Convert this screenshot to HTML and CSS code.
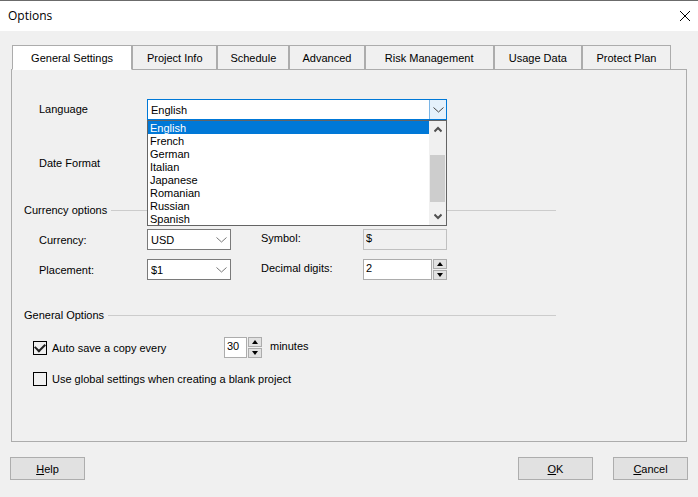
FILE: index.html
```html
<!DOCTYPE html>
<html lang="en">
<head>
    <meta charset="UTF-8">
    <meta name="viewport" content="width=device-width, initial-scale=1.0">
    <title>Options</title>
    <link rel="stylesheet" href="styles.css">
</head>
<body>
    <header class="title-bar">
        <h1>Options</h1>
        <button class="close" type="button" aria-label="Close">
            <svg width="10" height="10" viewBox="0 0 10 10"><path d="M0 0L10 10M10 0L0 10" stroke="#000" fill="none"/></svg>
        </button>
    </header>

    <main class="content">
        <div class="tabs" role="tablist">
            <button class="tab active" type="button" role="tab" aria-selected="true">General Settings</button>
            <button class="tab" type="button" role="tab">Project Info</button>
            <button class="tab" type="button" role="tab">Schedule</button>
            <button class="tab" type="button" role="tab">Advanced</button>
            <button class="tab" type="button" role="tab">Risk Management</button>
            <button class="tab" type="button" role="tab">Usage Data</button>
            <button class="tab" type="button" role="tab">Protect Plan</button>
        </div>

        <form class="panel" id="options">
            <div class="row language-row">
                <label for="language">Language</label>
                <div class="combo open">
                    <select id="language">
                        <option>English</option>
                    </select>
                    <span class="arrow"><svg width="11" height="6" viewBox="0 0 11 6"><path d="M0.5 0.5L5.5 5L10.5 0.5" stroke="#444" fill="none"/></svg></span>
                    <div class="dropdown">
                        <ul class="list" role="listbox" aria-label="Language">
                            <li class="selected" role="option" aria-selected="true">English</li>
                            <li role="option">French</li>
                            <li role="option">German</li>
                            <li role="option">Italian</li>
                            <li role="option">Japanese</li>
                            <li role="option">Romanian</li>
                            <li role="option">Russian</li>
                            <li role="option">Spanish</li>
                        </ul>
                        <div class="scrollbar">
                            <svg width="8" height="7" viewBox="0 0 8 7"><path d="M0.5 5.5L4 2L7.5 5.5" stroke="#505050" stroke-width="2" fill="none"/></svg>
                            <span class="thumb"></span>
                            <svg width="8" height="7" viewBox="0 0 8 7"><path d="M0.5 1.5L4 5L7.5 1.5" stroke="#505050" stroke-width="2" fill="none"/></svg>
                        </div>
                    </div>
                </div>
            </div>

            <div class="row">
                <label for="date-format">Date Format</label>
                <div class="combo">
                    <select id="date-format"></select>
                </div>
            </div>

            <section class="currency-group">
                <h2>Currency options</h2>
                <div class="currency">
                    <label for="currency">Currency:</label>
                    <div class="combo">
                        <select id="currency"><option>USD</option></select>
                        <span class="arrow"><svg width="11" height="6" viewBox="0 0 11 6"><path d="M0.5 0.5L5.5 5L10.5 0.5" stroke="#777" fill="none"/></svg></span>
                    </div>
                    <label class="second" for="symbol">Symbol:</label>
                    <input class="text" id="symbol" type="text" value="$" readonly>

                    <label for="placement">Placement:</label>
                    <div class="combo">
                        <select id="placement"><option>$1</option></select>
                        <span class="arrow"><svg width="11" height="6" viewBox="0 0 11 6"><path d="M0.5 0.5L5.5 5L10.5 0.5" stroke="#777" fill="none"/></svg></span>
                    </div>
                    <label class="second" for="digits">Decimal digits:</label>
                    <div class="spinner">
                        <input class="text" id="digits" type="text" value="2">
                        <div class="steps">
                            <button type="button" aria-label="More digits"><svg width="6" height="4" viewBox="0 0 6 4"><path d="M3 0L6 4H0Z"/></svg></button>
                            <button type="button" aria-label="Fewer digits"><svg width="6" height="4" viewBox="0 0 6 4"><path d="M0 0H6L3 4Z"/></svg></button>
                        </div>
                    </div>
                </div>
            </section>

            <section class="general-group">
                <h2>General Options</h2>
                <div class="check-row">
                    <input id="autosave" type="checkbox" checked>
                    <label class="autosave-label" for="autosave">Auto save a copy every</label>
                    <div class="spinner small">
                        <input class="text" id="minutes" type="text" value="30">
                        <div class="steps">
                            <button type="button" aria-label="More minutes"><svg width="6" height="4" viewBox="0 0 6 4"><path d="M3 0L6 4H0Z"/></svg></button>
                            <button type="button" aria-label="Fewer minutes"><svg width="6" height="4" viewBox="0 0 6 4"><path d="M0 0H6L3 4Z"/></svg></button>
                        </div>
                    </div>
                    <label class="unit" for="minutes">minutes</label>
                </div>
                <div class="check-row">
                    <input id="global" type="checkbox">
                    <label for="global">Use global settings when creating a blank project</label>
                </div>
            </section>
        </form>
    </main>

    <footer class="buttons">
        <button class="help" type="button"><u>H</u>elp</button>
        <button type="submit" form="options"><u>O</u>K</button>
        <button type="button"><u>C</u>ancel</button>
    </footer>
</body>
</html>
```

FILE: styles.css
```css
* {
    box-sizing: border-box;
}

body {
    margin: 0;
    min-height: 100vh;
    display: flex;
    flex-direction: column;
    background: #f0f0f0;
    color: #000;
    font-family: 'Liberation Sans', Arial, sans-serif;
    font-size: 11px;
    line-height: 16px;
}

button, input, select {
    font: inherit;
    color: inherit;
    margin: 0;
    padding: 0;
    border-radius: 0;
}

svg {
    display: block;
}

.title-bar {
    display: flex;
    align-items: center;
    justify-content: space-between;
    height: 31px;
    padding: 0 8px;
    background: #fff;
    border-top: 1px solid #6b6b6b;
}

h1 {
    margin: 0;
    font-family: 'Open Sans', sans-serif;
    font-size: 12px;
    font-weight: normal;
}

.close {
    border: none;
    background: none;
}

.content {
    flex: 1;
    display: flex;
    flex-direction: column;
    padding: 14px 11px 0;
}

.tabs {
    display: grid;
    grid-template-columns: 120fr 85fr 72fr 75fr 129fr 88fr 89fr;
    margin: 0 16px -1px 1px;
}

.tab {
    height: 25px;
    border: 1px solid #acacac;
    background: #f0f0f0;
    white-space: nowrap;
}

.tab.active {
    background: #fff;
    border-bottom-color: #fff;
    z-index: 1;
}

.panel {
    flex: 1;
    border: 1px solid #acacac;
    padding: 29px 130px 0 12px;
}

.row {
    display: grid;
    grid-template-columns: 108px 300px;
    align-items: center;
    padding-left: 15px;
}

.row label {
    padding-bottom: 2px;
}

.language-row {
    margin-bottom: 33px;
}

.combo {
    position: relative;
    height: 21px;
}

.combo select {
    appearance: none;
    display: block;
    width: 100%;
    height: 21px;
    padding: 0 3px;
    border: 1px solid #7a7a7a;
    background: #fff;
}

.arrow {
    position: absolute;
    top: 1px;
    right: 1px;
    bottom: 1px;
    width: 17px;
    display: flex;
    align-items: center;
    justify-content: center;
    pointer-events: none;
}

.combo.open select {
    border-color: #0078d7;
}

.open .arrow {
    background: #e5f1fb;
    border-left: 1px solid #7ab5e6;
}

.dropdown {
    position: absolute;
    top: 100%;
    left: 0;
    right: 0;
    z-index: 2;
    display: flex;
    border: 1px solid #646464;
    background: #fff;
}

.list {
    flex: 1;
    margin: 0;
    padding: 0;
    list-style: none;
    line-height: 12px;
}

.list li {
    padding: 1px 0 0 2px;
}

.list .selected {
    background: #0078d7;
    color: #fff;
}

.scrollbar {
    width: 17px;
    display: flex;
    flex-direction: column;
    align-items: center;
    justify-content: space-between;
    padding: 5px 0;
    background: #f0f0f0;
}

.thumb {
    width: 15px;
    height: 47px;
    margin-top: 10px;
    background: #cdcdcd;
}

h2 {
    display: flex;
    align-items: center;
    gap: 4px;
    margin: 0;
    font-size: 11px;
    font-weight: normal;
}

h2::after {
    content: "";
    flex: 1;
    border-top: 1px solid #ccc;
}

.currency-group {
    margin-top: 28px;
}

.general-group {
    margin-top: 27px;
}

.currency {
    display: grid;
    grid-template-columns: 108px 84px 132px 84px;
    row-gap: 9px;
    align-items: center;
    padding: 11px 0 0 15px;
}

.second {
    padding: 0 0 4px 30px;
}

.text {
    min-width: 0;
    width: 100%;
    height: 21px;
    padding: 0 2px 4px;
    border: 1px solid #acacac;
    background: #fff;
}

.text[readonly] {
    border-color: #c0c0c0;
    background: #f0f0f0;
}

.spinner {
    display: flex;
    gap: 1px;
}

.small {
    width: 38px;
}

.steps {
    display: flex;
    flex-direction: column;
    gap: 1px;
}

.steps button {
    display: flex;
    align-items: center;
    justify-content: center;
    width: 14px;
    height: 10px;
    border: 1px solid #acacac;
    background: #e1e1e1;
}

.check-row {
    display: flex;
    align-items: center;
    min-height: 21px;
    margin-top: 10px;
    padding-left: 9px;
}

h2 + .check-row {
    margin-top: 14px;
}

.check-row input[type="checkbox"] {
    appearance: none;
    width: 14px;
    height: 14px;
    margin-right: 5px;
    border: 1px solid #000;
    background: #f0f0f0;
}

.check-row input[type="checkbox"]:checked {
    display: grid;
    place-items: center;
}

.check-row input[type="checkbox"]:checked::before {
    content: "";
    width: 8px;
    height: 5px;
    margin-bottom: 2px;
    border: solid #222;
    border-width: 0 0 2px 2px;
    transform: rotate(-45deg);
}

.autosave-label {
    width: 172px;
}

.unit {
    padding: 0 0 4px 8px;
}

.buttons {
    display: flex;
    gap: 20px;
    padding: 15px 10px 17px;
}

.buttons button {
    width: 75px;
    height: 23px;
    border: 1px solid #adadad;
    background: #e1e1e1;
}

.buttons .help {
    margin-right: auto;
}
```
